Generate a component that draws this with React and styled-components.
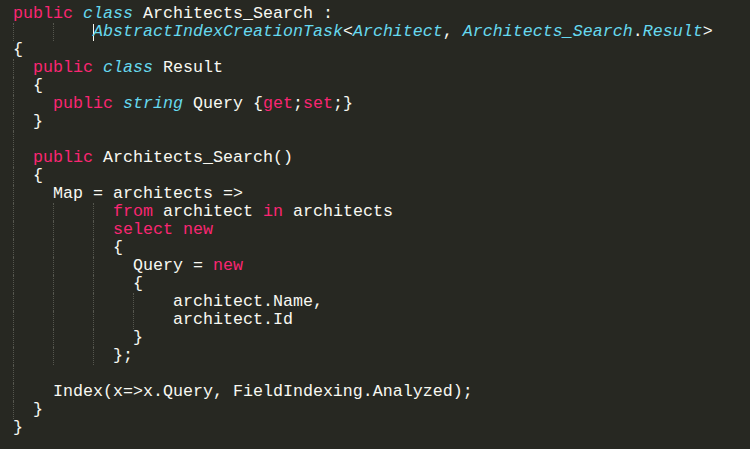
import React from "react";
import styled, { createGlobalStyle, css } from "styled-components";

const Global = createGlobalStyle`
  html, body {
    margin: 0;
    padding: 0;
    background: #272822;
  }
  * { box-sizing: border-box; }
`;

const Editor = styled.div`
  min-height: 100vh;
  width: 750px;
  background: #272822;
  padding: 5px 0 0 13px;
  font-family: "Courier New", "Nimbus Mono PS", "FreeMono", "Liberation Mono", monospace;
  font-size: 16.667px;
  color: #f8f8f2;
  overflow: hidden;
`;

const Line = styled.div`
  display: flex;
  align-items: stretch;
  height: 18px;
  line-height: 18px;
  white-space: pre;
`;

const Indent = styled.span`
  flex: 0 0 auto;
  width: ${(p) => p.$cols * 10}px;
  height: 18px;
  ${(p) =>
    p.$guide &&
    css`
      border-left: 1px dotted #55564e;
    `}
`;

const Code = styled.span`
  display: inline-flex;
  align-items: center;
  white-space: pre;
`;

const kinds = {
  k: css`color: #f92672;`,
  s: css`color: #66d9ef; font-style: italic;`,
  t: css`color: #66d9ef; font-style: italic;`,
  p: css`color: #f8f8f2;`,
};

const Token = styled.span`
  ${(p) => kinds[p.$kind]}
`;

const Caret = styled.span`
  display: inline-block;
  width: 1px;
  height: 17px;
  margin-right: -1px;
  background: #f8f8f0;
  align-self: center;
`;

const G4 = [4];
const lines = [
  { ind: [], code: [["k", "public"], ["p", " "], ["s", "class"], ["p", " Architects_Search :"]] },
  {
    ind: [4, 4],
    caret: true,
    code: [
      ["t", "AbstractIndexCreationTask"],
      ["p", "<"],
      ["t", "Architect"],
      ["p", ", "],
      ["t", "Architects_Search"],
      ["p", "."],
      ["t", "Result"],
      ["p", ">"],
    ],
  },
  { ind: [], code: [["p", "{"]] },
  { ind: [2], code: [["k", "public"], ["p", " "], ["s", "class"], ["p", " Result"]] },
  { ind: [2], code: [["p", "{"]] },
  {
    ind: G4,
    code: [
      ["k", "public"],
      ["p", " "],
      ["s", "string"],
      ["p", " Query {"],
      ["k", "get"],
      ["p", ";"],
      ["k", "set"],
      ["p", ";}"],
    ],
  },
  { ind: [2], code: [["p", "}"]] },
  { ind: [2], code: [] },
  { ind: [2], code: [["k", "public"], ["p", " Architects_Search()"]] },
  { ind: [2], code: [["p", "{"]] },
  { ind: G4, code: [["p", "Map = architects =>"]] },
  { ind: [4, 4, 2], code: [["k", "from"], ["p", " architect "], ["k", "in"], ["p", " architects"]] },
  { ind: [4, 4, 2], code: [["k", "select"], ["p", " "], ["k", "new"]] },
  { ind: [4, 4, 2], code: [["p", "{"]] },
  { ind: [4, 4, 4], code: [["p", "Query = "], ["k", "new"]] },
  { ind: [4, 4, 4], code: [["p", "{"]] },
  { ind: [4, 4, 4, 4], code: [["p", "architect.Name,"]] },
  { ind: [4, 4, 4, 4], code: [["p", "architect.Id"]] },
  { ind: [4, 4, 4], code: [["p", "}"]] },
  { ind: [4, 4, 2], code: [["p", "};"]] },
  { ind: [2], code: [] },
  { ind: G4, code: [["p", "Index(x=>x.Query, FieldIndexing.Analyzed);"]] },
  { ind: [2], code: [["p", "}"]] },
  { ind: [], code: [["p", "}"]] },
];

export default function App() {
  return (
    <>
      <Global />
      <Editor>
        {lines.map((line, i) => (
          <Line key={i}>
            {line.ind.map((c, j) => (
              <Indent key={j} $cols={c} $guide />
            ))}
            {line.caret && <Caret />}
            <Code>
              {line.code.map(([kind, text], j) => (
                <Token key={j} $kind={kind}>
                  {text}
                </Token>
              ))}
            </Code>
          </Line>
        ))}
      </Editor>
    </>
  );
}
